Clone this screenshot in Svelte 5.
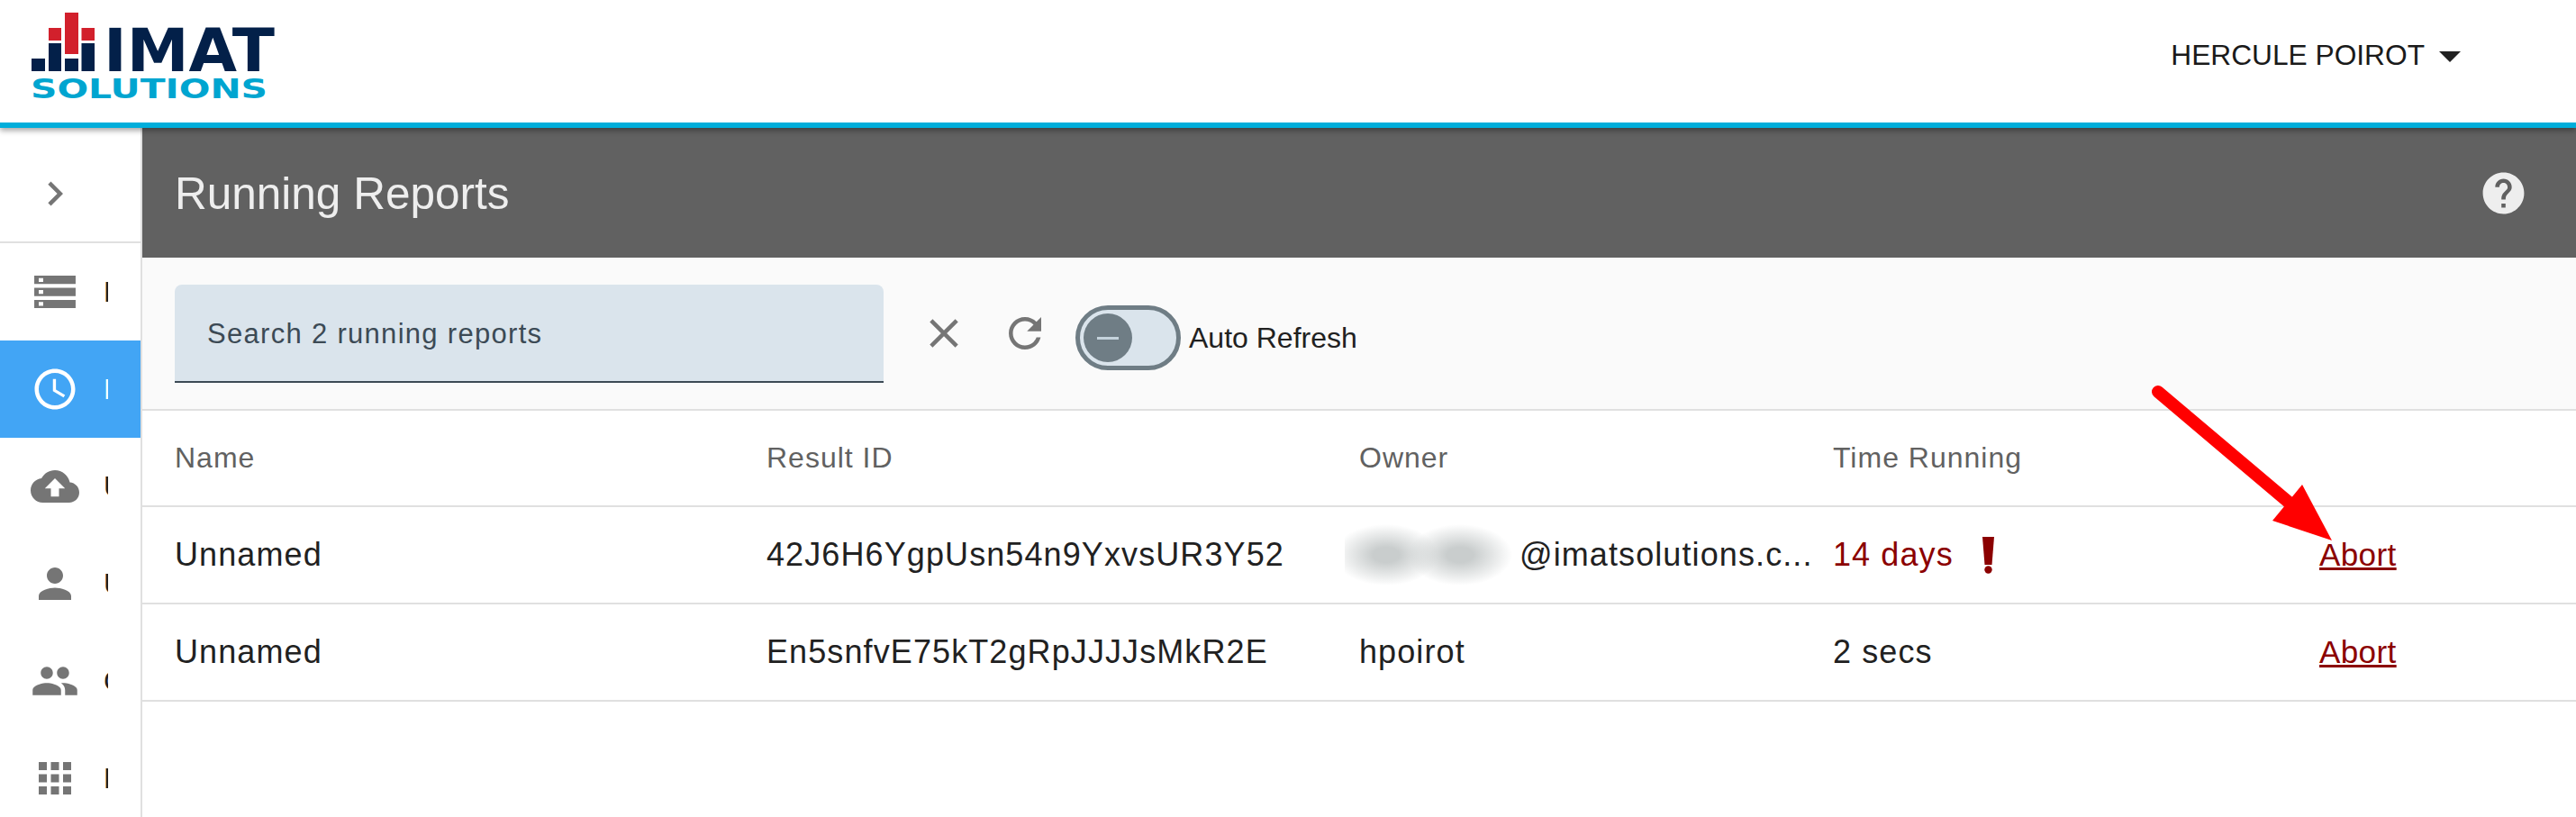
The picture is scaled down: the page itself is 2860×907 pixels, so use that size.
<script>
  const navItems = [
    { label: "Reports", d: "dns" },
    { label: "Running", d: "M11.99 2C6.47 2 2 6.48 2 12s4.47 10 9.99 10C17.52 22 22 17.52 22 12S17.52 2 11.99 2zM12 20c-4.42 0-8-3.58-8-8s3.58-8 8-8 8 3.58 8 8-3.58 8-8 8zm.5-13H11v6l5.25 3.15.75-1.23-4.5-2.67z", active: true },
    { label: "Upload", d: "M19.35 10.04C18.67 6.59 15.64 4 12 4 9.11 4 6.6 5.64 5.35 8.04 2.34 8.36 0 10.91 0 14c0 3.31 2.69 6 6 6h13c2.76 0 5-2.24 5-5 0-2.64-2.05-4.78-4.65-4.96zM14 13v4h-4v-4H7l5-5 5 5h-3z" },
    { label: "Users", d: "M12 12c2.21 0 4-1.79 4-4s-1.79-4-4-4-4 1.79-4 4 1.79 4 4 4zm0 2c-2.67 0-8 1.34-8 4v2h16v-2c0-2.66-5.33-4-8-4z" },
    { label: "Groups", d: "M16 11c1.66 0 2.99-1.34 2.99-3S17.66 5 16 5c-1.66 0-3 1.34-3 3s1.34 3 3 3zm-8 0c1.66 0 2.99-1.34 2.99-3S9.66 5 8 5C6.34 5 5 6.34 5 8s1.34 3 3 3zm0 2c-2.33 0-7 1.17-7 3.5V19h14v-2.5c0-2.33-4.67-3.5-7-3.5zm8 0c-.29 0-.62.02-.97.05 1.16.84 1.97 1.97 1.97 3.45V19h6v-2.5c0-2.33-4.67-3.5-7-3.5z" },
    { label: "Projects", d: "M4 8h4V4H4v4zm6 12h4v-4h-4v4zm-6 0h4v-4H4v4zm0-6h4v-4H4v4zm6 0h4v-4h-4v4zm6-10v4h4V4h-4zm-6 4h4V4h-4v4zm6 6h4v-4h-4v4zm0 6h4v-4h-4v4z" }
  ];

  const reports = [
    { name: "Unnamed", id: "42J6H6YgpUsn54n9YxvsUR3Y52", owner: "@imatsolutions.c...", hidden: true, time: "14 days", late: true },
    { name: "Unnamed", id: "En5snfvE75kT2gRpJJJJsMkR2E", owner: "hpoirot", time: "2 secs" }
  ];
</script>

<div class="page">
  <header>
    <svg class="logo" width="320" height="120" viewBox="0 0 320 120">
      <g fill="#032049">
        <rect x="35" y="65" width="15" height="14" />
        <rect x="54" y="48" width="14" height="31" />
        <rect x="72" y="65" width="15" height="14" />
        <rect x="90.5" y="48" width="14.5" height="31" />
        <text class="logo-main" x="115" y="79" textLength="190" lengthAdjust="spacingAndGlyphs">IMAT</text>
      </g>
      <g fill="#d2202c">
        <rect x="54" y="31" width="14" height="14" />
        <rect x="72" y="14" width="15" height="46" />
        <rect x="90.5" y="31" width="14.5" height="14" />
      </g>
      <text class="logo-sub" x="34" y="109" textLength="263" lengthAdjust="spacingAndGlyphs">SOLUTIONS</text>
    </svg>
    <div class="user">
      <span>HERCULE POIROT</span>
      <i class="caret"></i>
    </div>
  </header>

  <div class="body">
    <nav>
      <div class="toggle-row">
        <svg width="54" height="54" viewBox="0 0 24 24"><path d="M10 6L8.59 7.41 13.17 12l-4.58 4.59L10 18l6-6z" /></svg>
      </div>
      {#each navItems as item}
        <div class="nav-item" class:active={item.active}>
          <svg width="54" height="54" viewBox="0 0 24 24">
            {#if item.d === "dns"}
              <path fill-rule="evenodd" d="M1.8 4h20.4v4.1H1.8zM4 5.2v1.9h2.2V5.2zM1.8 10h20.4v4.1H1.8zM4 11.100v1.9h2.2v-1.9zM1.8 16h20.4v4H1.8zM4 17v1.9h2.2V17z" />
            {:else}
              <path d={item.d} />
            {/if}
          </svg>
          <span class="nav-label">{item.label}</span>
        </div>
      {/each}
    </nav>

    <main>
      <div class="title-bar">
        <h1>Running Reports</h1>
        <svg class="help" width="55" height="55" viewBox="0 0 24 24">
          <circle cx="12" cy="12" r="8" fill="#616161" />
          <path d="M12 2C6.48 2 2 6.48 2 12s4.48 10 10 10 10-4.48 10-10S17.52 2 12 2zm1 17h-2v-2h2v2zm2.07-7.75l-.9.92C13.45 12.9 13 13.5 13 15h-2v-.5c0-1.1.45-2.1 1.17-2.83l1.24-1.26c.37-.36.59-.86.59-1.41 0-1.1-.9-2-2-2s-2 .9-2 2H8c0-2.21 1.79-4 4-4s4 1.79 4 4c0 .88-.36 1.68-.93 2.25z" />
        </svg>
      </div>

      <div class="toolbar">
        <div class="search"><span>Search 2 running reports</span></div>
        <svg class="tool-icon close" width="54" height="54" viewBox="0 0 24 24"><path d="M19 6.41L17.59 5 12 10.59 6.41 5 5 6.41 10.59 12 5 17.59 6.41 19 12 13.41 17.59 19 19 17.59 13.41 12z" /></svg>
        <svg class="tool-icon refresh" width="54" height="54" viewBox="0 0 24 24"><path d="M17.65 6.35C16.2 4.9 14.21 4 12 4c-4.42 0-7.99 3.58-7.99 8s3.57 8 7.99 8c3.73 0 6.84-2.55 7.73-6h-2.08c-.82 2.33-3.04 4-5.65 4-3.31 0-6-2.69-6-6s2.69-6 6-6c1.66 0 3.14.69 4.22 1.78L13 11h7V4l-2.35 2.35z" /></svg>
        <div class="auto">
          <div class="switch"><span class="knob"></span></div>
          <span class="switch-label">Auto Refresh</span>
        </div>
      </div>

      <div class="row head">
        <div>Name</div>
        <div>Result ID</div>
        <div>Owner</div>
        <div>Time Running</div>
        <div></div>
      </div>
      {#each reports as r}
        <div class="row">
          <div>{r.name}</div>
          <div>{r.id}</div>
          <div class="owner">
            {#if r.hidden}<span class="blur"></span>{/if}
            <span class:shifted={r.hidden}>{r.owner}</span>
          </div>
          <div class="time" class:late={r.late}>
            <span>{r.time}</span>
            {#if r.late}
              <svg width="13" height="41" viewBox="0 0 13 41"><path d="M0 0h13l-2.5 31h-8z" /><circle cx="6.5" cy="36.5" r="4.2" /></svg>
            {/if}
          </div>
          <div><a href="#abort">Abort</a></div>
        </div>
      {/each}
    </main>
  </div>

  <svg class="arrow" width="2860" height="907">
    <line x1="2396" y1="435" x2="2545" y2="561" stroke="#ff0000" stroke-width="14" stroke-linecap="round" />
    <polygon points="2556,538 2589,600 2523,578" fill="#ff0000" />
  </svg>
</div>

<style>
  :global(body) {
    margin: 0;
  }

  .page {
    position: relative;
    height: 907px;
    overflow: hidden;
    font-family: "Liberation Sans", Arial, sans-serif;
    color: #212121;
  }

  header {
    position: relative;
    z-index: 2;
    display: flex;
    justify-content: space-between;
    align-items: center;
    height: 136px;
    background: #fff;
    border-bottom: 6px solid #00aedb;
    box-shadow: 0 3px 6px rgba(0, 0, 0, 0.35);
  }

  .logo {
    flex: none;
    align-self: flex-start;
  }

  .logo-main {
    font-family: "DejaVu Sans", sans-serif;
    font-size: 66px;
    font-weight: 700;
  }

  .logo-sub {
    font-family: "DejaVu Sans", sans-serif;
    font-size: 30px;
    font-weight: 700;
    fill: #00a5d0;
  }

  .user {
    display: flex;
    align-items: center;
    gap: 16px;
    padding: 0 128px 14px 0;
    font-size: 31.7px;
    color: #1a1a1a;
  }

  .caret {
    border-left: 12px solid transparent;
    border-right: 12px solid transparent;
    border-top: 12px solid #212121;
    margin-top: 4px;
  }

  .body {
    display: flex;
  }

  nav {
    flex: none;
    width: 156px;
    border-right: 2px solid #e0e0e0;
    height: 765px;
  }

  .toggle-row {
    display: flex;
    justify-content: center;
    align-items: center;
    box-sizing: border-box;
    height: 128px;
    padding-top: 20px;
    padding-right: 34px;
    border-bottom: 2px solid #e0e0e0;
  }

  .toggle-row svg {
    fill: #757575;
  }

  .nav-item {
    display: flex;
    align-items: center;
    height: 108px;
    padding-left: 34px;
    fill: #757575;
  }

  .nav-item svg {
    flex: none;
  }

  .nav-item.active {
    background: #42a5f5;
    fill: #fff;
    color: #fff;
  }

  .nav-label {
    width: 5px;
    margin-left: 27px;
    overflow: hidden;
    font-size: 32px;
    white-space: nowrap;
  }

  main {
    flex: 1;
    min-width: 0;
  }

  .title-bar {
    display: flex;
    justify-content: space-between;
    align-items: center;
    height: 144px;
    padding: 0 53px 0 36px;
    background: #616161;
  }

  h1 {
    margin: 0;
    font-size: 49.5px;
    font-weight: 400;
    color: #eee;
  }

  .help {
    fill: #eee;
  }

  .toolbar {
    display: flex;
    align-items: center;
    box-sizing: border-box;
    height: 170px;
    padding: 0 36px;
    background: #fafafa;
    border-bottom: 2px solid #e0e0e0;
    fill: #757575;
  }

  .search {
    box-sizing: border-box;
    display: flex;
    align-items: center;
    width: 787px;
    height: 109px;
    padding: 3px 0 0 36px;
    background: #dae4ec;
    border-bottom: 2px solid #3c4a55;
    border-radius: 8px 8px 0 0;
    color: #3c4a55;
    font-size: 31px;
    letter-spacing: 1.3px;
  }

  .tool-icon {
    flex: none;
  }

  .close {
    margin-left: 40px;
  }

  .refresh {
    margin-left: 36px;
  }

  .auto {
    display: flex;
    align-items: center;
    padding-top: 10px;
  }

  .switch {
    box-sizing: border-box;
    display: flex;
    align-items: center;
    width: 117px;
    height: 72px;
    margin-left: 29px;
    padding-left: 4px;
    background: #dae4ec;
    border: 5px solid #6f7d85;
    border-radius: 36px;
  }

  .knob {
    position: relative;
    width: 54px;
    height: 54px;
    background: #6f7d85;
    border-radius: 50%;
  }

  .knob::after {
    content: "";
    position: absolute;
    left: 15px;
    top: 26px;
    width: 24px;
    height: 3px;
    background: #c5d3dc;
  }

  .switch-label {
    margin-left: 9px;
    font-size: 32px;
  }

  .row {
    display: grid;
    grid-template-columns: 657px 658px 526px 540px 1fr;
    align-items: center;
    box-sizing: border-box;
    height: 108px;
    padding-left: 36px;
    border-bottom: 2px solid #e0e0e0;
    font-size: 36px;
    letter-spacing: 1.1px;
  }

  .row.head {
    height: 107px;
    color: #616161;
    font-size: 32px;
    letter-spacing: 1px;
  }

  .owner {
    position: relative;
    white-space: nowrap;
  }

  .shifted {
    margin-left: 178px;
  }

  /* stands over the part of the address that is hidden */
  .blur {
    position: absolute;
    left: -16px;
    top: -14px;
    width: 194px;
    height: 69px;
    background:
      radial-gradient(ellipse 58px 34px at 46px 35px, #c9cdcd 25%, transparent),
      radial-gradient(ellipse 58px 34px at 128px 35px, #c9cdcd 25%, transparent);
  }

  .time {
    display: flex;
    align-items: center;
    gap: 32px;
  }

  .late {
    color: #8b0000;
    fill: #8b0000;
  }

  a {
    color: #8b0000;
    font-size: 35px;
    letter-spacing: 0.4px;
    text-decoration-thickness: 3px;
  }

  .arrow {
    position: absolute;
    left: 0;
    top: 0;
    z-index: 3;
    pointer-events: none;
  }
</style>
